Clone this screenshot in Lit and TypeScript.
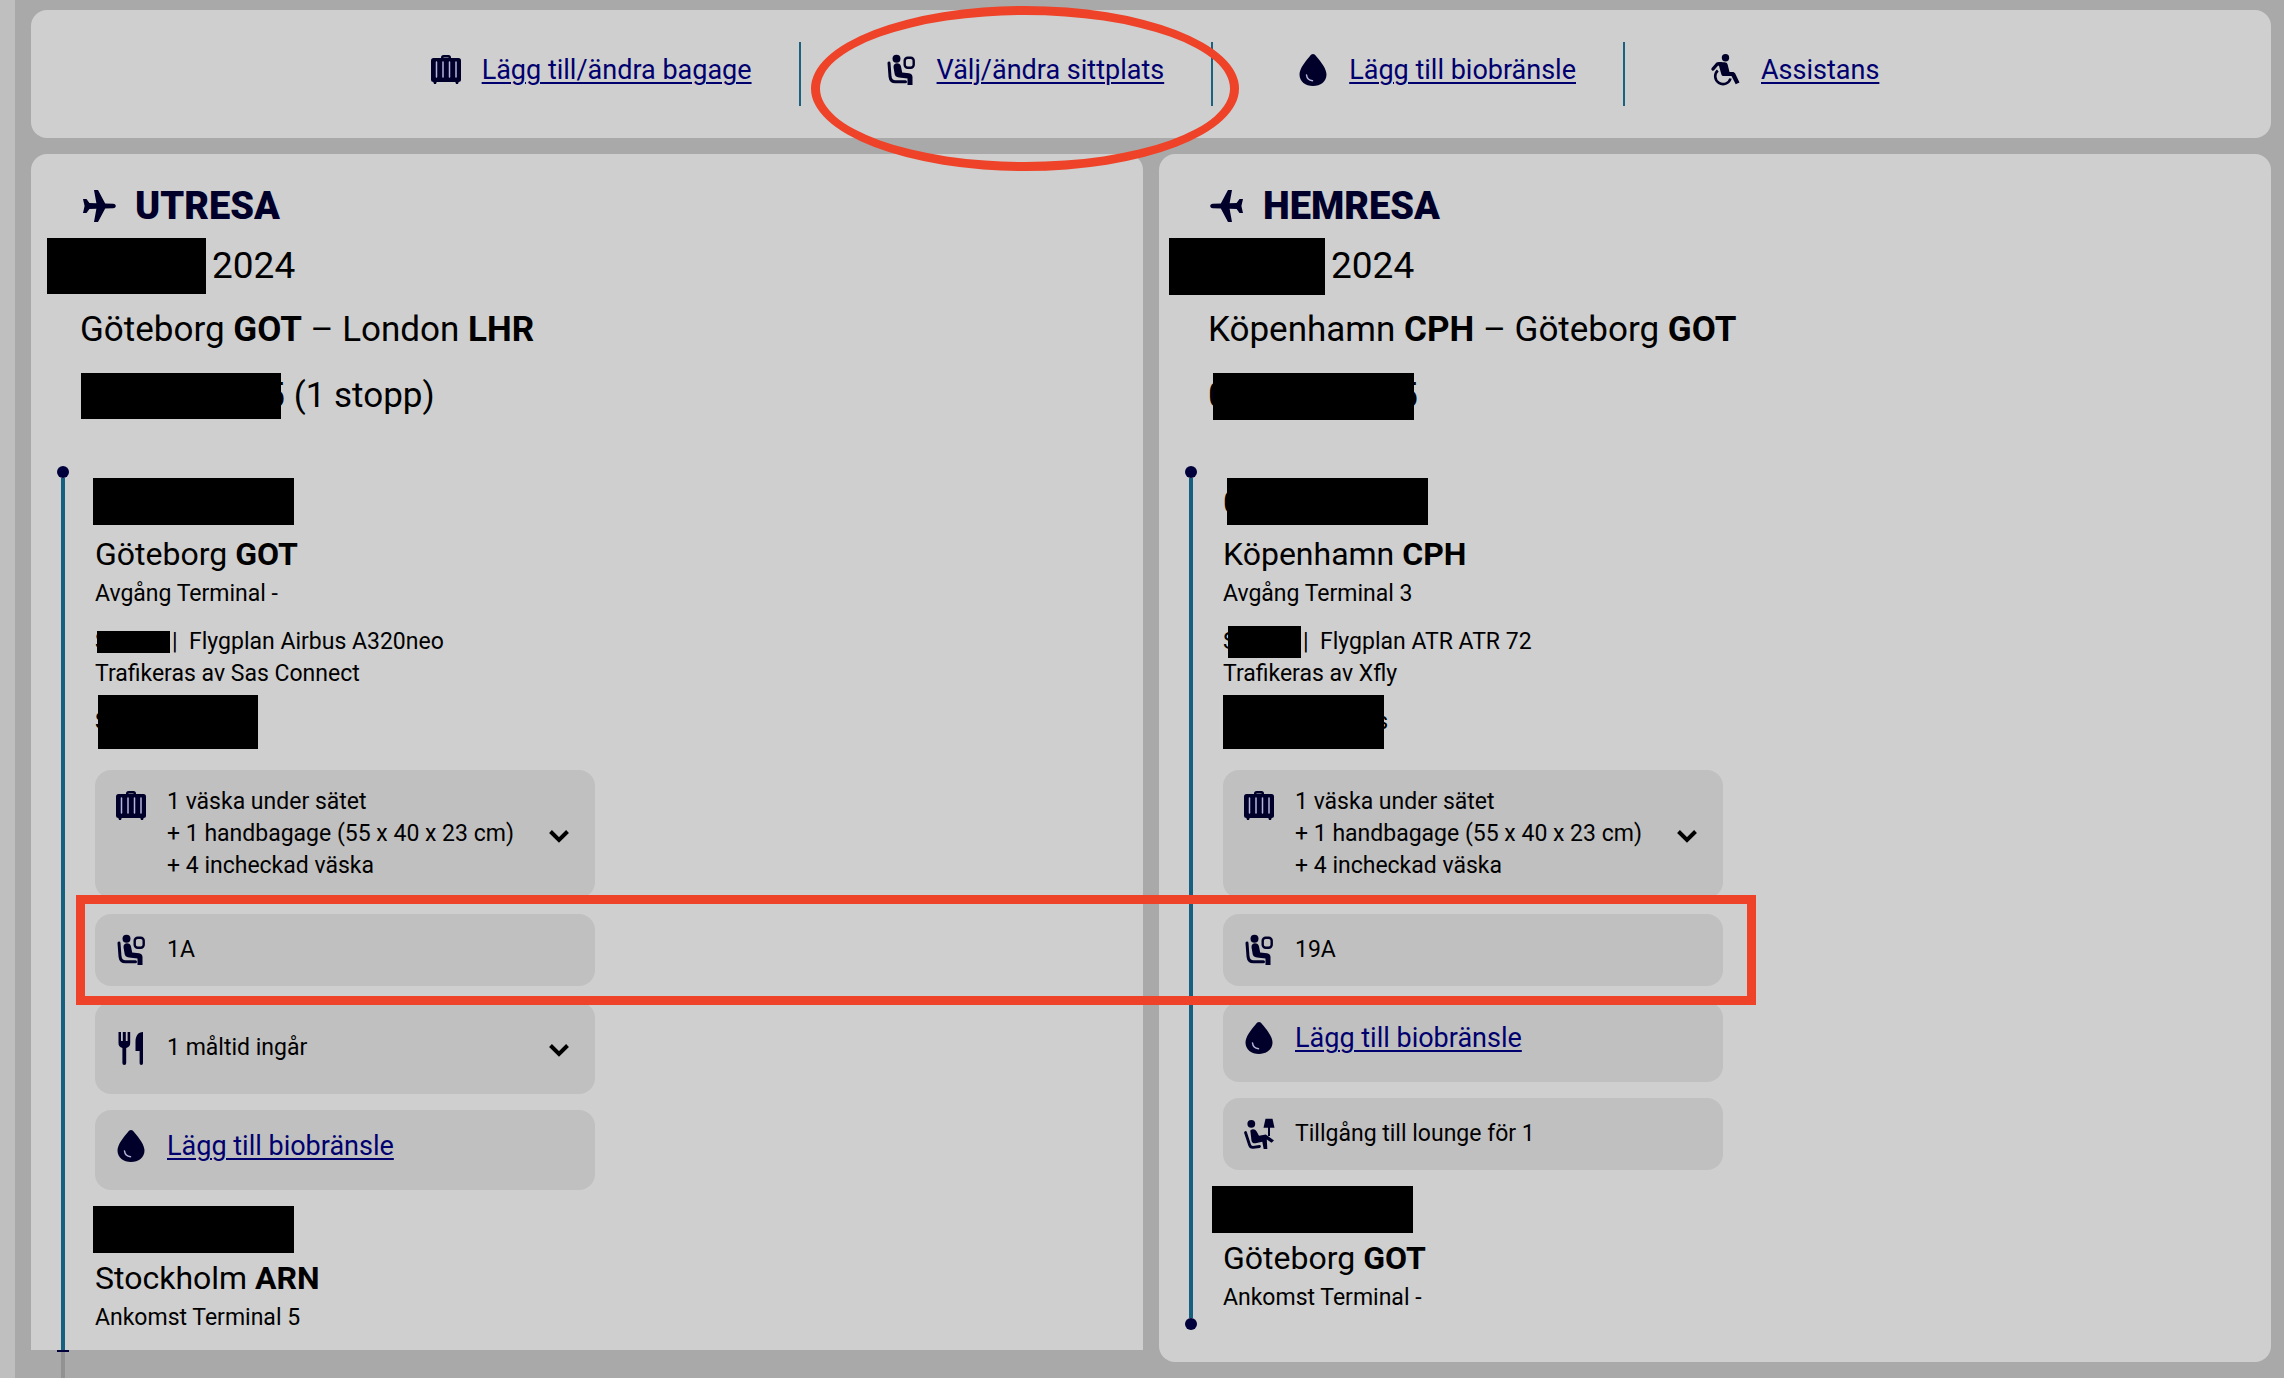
import { LitElement, html, css, svg, nothing } from "lit";
import { customElement, property } from "lit/decorators.js";
import { styleMap } from "lit/directives/style-map.js";

type IconName = "bag" | "seat" | "drop" | "wheelchair" | "meal" | "lounge" | "plane" | "chevron";

const glyphs: Record<IconName, unknown> = {
  bag: svg`
    <path d="M11 5V3.5A2.5 2.5 0 0 1 13.500 1h5A2.500 2.500 0 0 1 21 3.500V5h-2.500V3.500h-5V5z" fill="currentColor"/>
    <rect x="1" y="4" width="30" height="24" rx="2.500" fill="currentColor"/>
    <path d="M3 27h4l-1 3H4zM25 27h4l-1 3h-2z" fill="currentColor"/>
    <path class="cut" d="M6.500 8v15M13 8v15M19.500 8v15M26 8v15"/>`,
  seat: svg`
    <circle cx="11.500" cy="4.800" r="4" fill="currentColor"/>
    <path d="M8.500 13c0-2.500 1.500-3.700 3.500-3.700s3.500 1.200 4 3.200l1.200 6 6.800.8c2.300.4 3.500 1.700 3.500 3.800V31h-5v-6.500L14 23.500c-2.900-.4-4.200-1.800-4.500-4.300z" fill="currentColor"/>
    <path d="M4 9l1 13.500c.4 3.700 2.300 5.300 5.500 5.300h10" fill="none" stroke="currentColor" stroke-width="3" stroke-linecap="round" stroke-linejoin="round"/>
    <rect x="19.700" y="3.700" width="9" height="10" rx="3" fill="none" stroke="currentColor" stroke-width="2.400"/>`,
  drop: svg`
    <path d="M16 0c1.200 0 2.100.9 3.200 2.200C24.300 8 29.500 15 29.500 20.500 29.500 27.500 23.500 32 16 32S2.500 27.500 2.500 20.500C2.500 15 7.700 8 12.800 2.200 13.900.9 14.800 0 16 0z" fill="currentColor"/>
    <path class="cut" d="M9.500 21c.4 3.300 2.700 5.300 6 5.700"/>`,
  wheelchair: svg`
    <circle cx="16.500" cy="3.700" r="3.700" fill="currentColor"/>
    <path d="M4 15l4.300-5 3.700-.2" fill="none" stroke="currentColor" stroke-width="3.400" stroke-linecap="round" stroke-linejoin="round"/>
    <path d="M9 8.300h6.500c1.600 0 2.700.8 3.200 2.400L20.500 18h3c1.300 0 2.100.5 2.700 1.600l4.300 8.900-3.800 1.700L22.500 22H15c-1.700 0-2.700-1-2.900-2.600z" fill="currentColor"/>
    <path d="M8.800 16.500a7.800 7.800 0 1 0 12.700 8" fill="none" stroke="currentColor" stroke-width="2.600"/>`,
  meal: svg`
    <path d="M3.500 0H6v9h1.800V0h3v9h1.800V0h2.600v11c0 2.800-1.400 4.400-4 4.900V31a1.900 1.900 0 0 1-3.800 0V15.900c-2.600-.5-3.900-2.100-3.900-4.900zM28 0v31.300a1.700 1.700 0 0 1-3.400 0V19H20.500v-9C20.500 4 23 0 28 0z" fill="currentColor"/>`,
  lounge: svg`
    <circle cx="8.300" cy="5.800" r="3.900" fill="currentColor"/>
    <path d="M22.500.8h7l2 9H20.500z" fill="currentColor"/>
    <path d="M26 9v9" stroke="currentColor" stroke-width="2"/>
    <path d="M7.300 12.500c2-2 5-1.500 6.200.8l2.500 4.500 6.800-1.200L31 22.500l-2.500 2.300-4.700-3.200.5 9.400h-3.600l-1.400-7.200-6.800 1.400c-2 .4-3.300-.4-4-2.500z" fill="currentColor"/>
    <path d="M2.500 14.500l4 12.300c.6 1.900 1.800 2.700 3.700 2.500l6.300-.8" fill="none" stroke="currentColor" stroke-width="2.800" stroke-linecap="round" stroke-linejoin="round"/>`,
  plane: svg`
    <path d="M11 0h4l7.200 13.500 8 .3c1.700.2 2.600 1 2.600 2.200s-.9 2-2.600 2.200l-8 .3L15 32h-4l2.400-13.300-7 .3L3.500 23H0l1.600-7L0 9h3.500l2.900 4 7 .3z" fill="currentColor"/>`,
  chevron: svg`
    <path d="M3.500 9.500l8.500 8.500 8.500-8.500" fill="none" stroke="currentColor" stroke-width="4"/>`,
};

@customElement("ui-icon")
class UiIcon extends LitElement {
  static styles = css`
    :host { display: inline-flex; align-items: center; justify-content: center; flex: none; width: 32px; height: 32px; }
    svg { display: block; width: 100%; height: 100%; overflow: visible; }
    .cut { fill: none; stroke: #b4b4dc; stroke-width: 1.500; stroke-linecap: round; }
  `;
  @property() name: IconName = "bag";
  render() {
    const box = this.name === "chevron" ? "0 0 24 24" : "0 0 32 32";
    return html`<svg viewBox=${box} aria-hidden="true">${glyphs[this.name]}</svg>`;
  }
}

interface Mask { x?: number; w: number; h: number; before?: string; after?: string; }
interface Item { icon: IconName; lines?: string[]; link?: string; expandable?: boolean; roomy?: boolean; }
interface Stop { mask: Mask; city: string; code: string; terminal: string; }
interface Journey {
  title: string; inbound?: boolean; date: Mask; year: string;
  from: [string, string]; to: [string, string];
  duration: Mask; stops?: string;
  departure: Stop; flight: Mask; plane: string; operator: string; details: Mask;
  items: Item[]; arrival: Stop; continues?: boolean;
}

const actions: { icon: IconName; label: string }[] = [
  { icon: "bag", label: "Lägg till/ändra bagage" },
  { icon: "seat", label: "Välj/ändra sittplats" },
  { icon: "drop", label: "Lägg till biobränsle" },
  { icon: "wheelchair", label: "Assistans" },
];

const baggage: Item = {
  icon: "bag", expandable: true,
  lines: ["1 väska under sätet", "+ 1 handbagage (55 x 40 x 23 cm)", "+ 4 incheckad väska"],
};

const journeys: Journey[] = [
  {
    title: "UTRESA", date: { x: -33, w: 159, h: 56 }, year: "2024",
    from: ["Göteborg", "GOT"], to: ["London", "LHR"],
    duration: { x: 1, w: 200, h: 46, after: "5" }, stops: "(1 stopp)",
    departure: { mask: { x: -2, w: 201, h: 47 }, city: "Göteborg", code: "GOT", terminal: "Avgång Terminal -" },
    flight: { x: 2, w: 73, h: 22, before: "S" }, plane: "Flygplan Airbus A320neo",
    operator: "Trafikeras av Sas Connect", details: { x: 3, w: 160, h: 54, before: "S" },
    items: [
      baggage,
      { icon: "seat", lines: ["1A"] },
      { icon: "meal", lines: ["1 måltid ingår"], expandable: true, roomy: true },
      { icon: "drop", link: "Lägg till biobränsle" },
    ],
    arrival: { mask: { x: -2, w: 201, h: 47 }, city: "Stockholm", code: "ARN", terminal: "Ankomst Terminal 5" },
    continues: true,
  },
  {
    title: "HEMRESA", inbound: true, date: { x: -39, w: 156, h: 57 }, year: "2024",
    from: ["Köpenhamn", "CPH"], to: ["Göteborg", "GOT"],
    duration: { x: 5, w: 201, h: 47, before: "0", after: "5" },
    departure: { mask: { x: 4, w: 201, h: 47, before: "0" }, city: "Köpenhamn", code: "CPH", terminal: "Avgång Terminal 3" },
    flight: { x: 5, w: 73, h: 32, before: "S" }, plane: "Flygplan ATR ATR 72",
    operator: "Trafikeras av Xfly", details: { x: 0, w: 161, h: 54, after: "s" },
    items: [
      baggage,
      { icon: "seat", lines: ["19A"] },
      { icon: "drop", link: "Lägg till biobränsle" },
      { icon: "lounge", lines: ["Tillgång till lounge för 1"] },
    ],
    arrival: { mask: { x: -11, w: 201, h: 47 }, city: "Göteborg", code: "GOT", terminal: "Ankomst Terminal -" },
  },
];

@customElement("journey-card")
class JourneyCard extends LitElement {
  static styles = css`
    :host { display: block; color: #000; }
    .card { background: #cfcfcf; border-radius: 16px; padding: 28px 24px 32px 26px; }
    .card.continues { border-radius: 16px 16px 0 0; padding-bottom: 0; }
    .head { padding-left: 23px; font-size: 35px; line-height: 64px; }
    h2 { display: flex; align-items: center; gap: 20px; margin: 0 0 8px; padding-left: 3px; font-size: 38px; line-height: 48px; font-weight: 900; color: #00002a; }
    .mirror { transform: scaleX(-1); }
    p { margin: 0; }
    .date { display: flex; gap: 6px; font-size: 37px; line-height: 56px; height: 56px; margin-bottom: 4px; }
    .duration { display: flex; align-items: center; gap: 4px; height: 64px; padding-top: 4px; box-sizing: border-box; }
    .mask { position: relative; display: inline-flex; flex: none; align-items: center; }
    .block { position: relative; z-index: 1; background: #000; flex: none; }
    .edge { position: absolute; line-height: 32px; }
    .edge.start { left: 0; }
    .edge.end { right: -4px; }
    .leg { display: flex; gap: 26px; margin-top: 40px; }
    .rail { position: relative; display: flex; flex-direction: column; align-items: center; flex: none; width: 12px; }
    .dot { width: 12px; height: 12px; border-radius: 50%; background: #00003c; }
    .line { flex: 1; width: 4px; background: #155f80; }
    .stub { position: absolute; top: 100%; left: 0; width: 12px; height: 28px; border-top: 2px solid #00003c; box-sizing: border-box; background: linear-gradient(#929292, #929292) center / 4px 100% no-repeat; }
    .body { flex: 1; min-width: 0; padding: 12px 0 16px; font-size: 23px; line-height: 32px; }
    .time { display: flex; align-items: flex-start; height: 52px; margin-bottom: 4px; font-size: 32px; }
    .arrival .time { height: 48px; }
    .city { font-size: 32px; line-height: 40px; margin-bottom: 4px; }
    .flight { display: flex; align-items: center; gap: 2px; margin-top: 16px; height: 32px; white-space: pre; }
    .details { display: flex; align-items: center; height: 64px; }
    ul { list-style: none; margin: 16px 0; padding: 0; display: flex; flex-direction: column; gap: 16px; max-width: 500px; }
    li { display: flex; align-items: center; gap: 20px; box-sizing: border-box; padding: 16px 24px 16px 20px; border-radius: 16px; background: #c0c0c0; }
    li.roomy { padding-top: 26px; padding-bottom: 26px; }
    li.linked { padding-bottom: 24px; }
    li > ui-icon { height: 40px; align-self: flex-start; color: #00002a; }
    .lines { flex: 1; white-space: nowrap; }
    a { font-size: 27px; line-height: 40px; color: #00006e; text-decoration-thickness: 2px; text-underline-offset: 3px; }
    button { display: flex; flex: none; padding: 0; border: 0; background: none; color: #000; cursor: pointer; }
    .chevron { width: 24px; height: 24px; }
  `;
  @property({ attribute: false }) journey!: Journey;

  private mask(m: Mask) {
    return html`<span class="mask" style=${styleMap({ paddingLeft: `${Math.max(m.x ?? 0, 0)}px`, marginLeft: `${Math.min(m.x ?? 0, 0)}px` })}>
      ${m.before ? html`<span class="edge start">${m.before}</span>` : nothing}
      <span class="block" style=${styleMap({ width: `${m.w}px`, height: `${m.h}px` })}></span>
      ${m.after ? html`<span class="edge end">${m.after}</span>` : nothing}
    </span>`;
  }

  private stop(s: Stop, kind: string) {
    return html`<div class=${kind}>
      <div class="time">${this.mask(s.mask)}</div>
      <p class="city">${s.city} <b>${s.code}</b></p>
      <p>${s.terminal}</p>
    </div>`;
  }

  private item(i: Item) {
    return html`<li class="${i.roomy ? "roomy" : ""} ${i.link ? "linked" : ""}">
      <ui-icon name=${i.icon}></ui-icon>
      ${i.link
        ? html`<a href="#">${i.link}</a>`
        : html`<div class="lines">${i.lines!.map((l) => html`<p>${l}</p>`)}</div>`}
      ${i.expandable
        ? html`<button type="button" aria-label=${i.lines![0]}><ui-icon class="chevron" name="chevron"></ui-icon></button>`
        : nothing}
    </li>`;
  }

  render() {
    const j = this.journey;
    return html`<section class="card ${j.continues ? "continues" : ""}">
      <header class="head">
        <h2><ui-icon class=${j.inbound ? "mirror" : ""} name="plane"></ui-icon>${j.title}</h2>
        <div class="date">${this.mask(j.date)}<span>${j.year}</span></div>
        <p>${j.from[0]} <b>${j.from[1]}</b> – ${j.to[0]} <b>${j.to[1]}</b></p>
        <div class="duration">${this.mask(j.duration)}${j.stops ? html`<span>&nbsp;${j.stops}</span>` : nothing}</div>
      </header>
      <div class="leg">
        <div class="rail">
          <span class="dot"></span><span class="line"></span>
          ${j.continues ? html`<span class="stub"></span>` : html`<span class="dot"></span>`}
        </div>
        <div class="body">
          ${this.stop(j.departure, "departure")}
          <div class="flight">${this.mask(j.flight)}<span>|  ${j.plane}</span></div>
          <p>${j.operator}</p>
          <div class="details">${this.mask(j.details)}</div>
          <ul>${j.items.map((i) => this.item(i))}</ul>
          ${this.stop(j.arrival, "arrival")}
        </div>
      </div>
    </section>`;
  }
}

@customElement("app-root")
class AppRoot extends LitElement {
  static styles = css`
    :host { display: block; font-family: Roboto, "Liberation Sans", sans-serif; }
    .page { position: relative; box-sizing: border-box; min-height: 100vh; overflow: hidden; padding: 10px 13px 16px 16px; background: #a9a9a9; border-left: 15px solid #bfbfbf; }
    nav { background: #cfcfcf; border-radius: 16px; padding: 32px 24px; margin-bottom: 16px; }
    .actions { list-style: none; margin: 0; padding: 0; display: flex; justify-content: center; }
    .actions li { display: flex; align-items: center; gap: 20px; padding: 0 47px 8px 84px; line-height: 56px; border-left: 2px solid #1b6280; color: #00002a; }
    .actions li:first-child { border-left: 0; padding-left: 54px; }
    .actions a { font-size: 27px; color: #00006e; text-decoration-thickness: 2px; text-underline-offset: 3px; }
    .journeys { display: grid; grid-template-columns: 1fr 1fr; gap: 16px; align-items: start; }
    .ring, .frame { position: absolute; box-sizing: border-box; border: 9px solid #ee4328; pointer-events: none; }
    .ring { left: 796px; top: 6px; width: 428px; height: 165px; border-radius: 50%; }
    .frame { left: 61px; top: 895px; width: 1680px; height: 110px; }
  `;
  render() {
    return html`<main class="page">
      <nav>
        <ul class="actions">
          ${actions.map((a) => html`<li><ui-icon name=${a.icon}></ui-icon><a href="#">${a.label}</a></li>`)}
        </ul>
      </nav>
      <div class="journeys">${journeys.map((j) => html`<journey-card .journey=${j}></journey-card>`)}</div>
      <div class="ring"></div>
      <div class="frame"></div>
    </main>`;
  }
}
